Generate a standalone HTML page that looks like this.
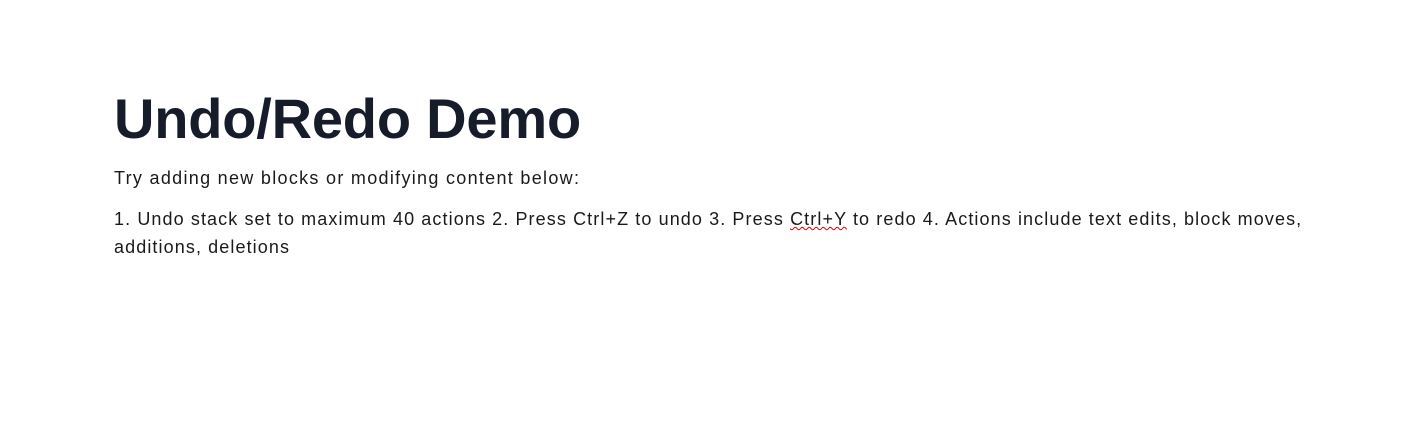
<!DOCTYPE html>
<html><head><style>
html,body{margin:0;padding:0;background:#fff;width:1408px;height:441px;overflow:hidden;font-family:"Liberation Sans",sans-serif;}
h1{position:absolute;left:114px;top:86px;margin:0;font-size:56px;line-height:66px;font-weight:bold;color:#161c2a;letter-spacing:-0.2px;}
p{position:absolute;left:114px;margin:0;font-size:18px;line-height:28px;color:#1a1a1a;letter-spacing:1.1px;}
.u{text-decoration:underline wavy #d00;text-decoration-thickness:1px;}
</style></head><body>
<h1>Undo/Redo Demo</h1>
<p style="top:164px;letter-spacing:1.3px">Try adding new blocks or modifying content below:</p>
<p style="top:205px;width:1200px">1. Undo stack set to maximum 40 actions 2. Press Ctrl+Z to undo 3. Press <span class="u">Ctrl+Y</span> to redo 4. Actions include text edits, block moves, additions, deletions</p>
</body></html>
